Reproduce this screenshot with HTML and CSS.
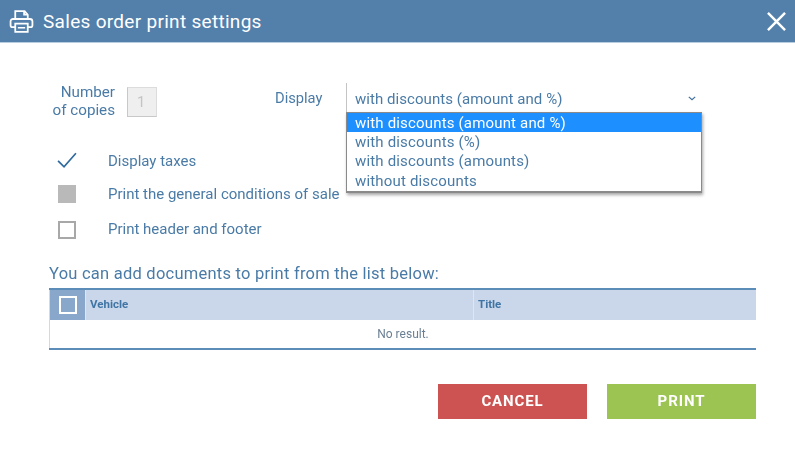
FILE: index.html
```html
<!DOCTYPE html>
<html lang="en">
<head>
  <meta charset="UTF-8">
  <title>Sales order print settings</title>
  <link rel="stylesheet" href="styles.css">
</head>
<body>
  <div class="dialog">
    <div class="titlebar">
      <svg class="print-icon" viewBox="0 0 24 24" fill="none" stroke="#fff" stroke-width="1.7">
        <path d="M6 10V2h9l3 3.500V10"/>
        <path d="M14.500 2v3.500H18"/>
        <path d="M6 17.500H3.500a2 2 0 0 1-2-2V12a2.400 2.400 0 0 1 2.400-2.400h16.200A2.400 2.400 0 0 1 22.500 12v3.500a2 2 0 0 1-2 2H18"/>
        <path d="M6 14h12v8H6z"/>
        <path d="M8.500 18h7" stroke-width="1.500"/>
      </svg>
      <h1>Sales order print settings</h1>
      <svg class="close-icon" viewBox="0 0 20 20" stroke="#fff" stroke-width="2.600">
        <path d="M1 1l18 18M19 1L1 19"/>
      </svg>
    </div>

    <div class="content">
      <div class="top-row">
        <label class="copies-label">Number<br>of copies</label>
        <div class="copies-input">1</div>
        <label class="display-label">Display</label>
        <div class="select">
          <div class="select-value">
            with discounts (amount and %)
            <svg class="chevron" viewBox="0 0 10 6" fill="none" stroke="#3f6f9c" stroke-width="1.500">
              <path d="M1 1l4 3.500L9 1"/>
            </svg>
          </div>
          <ul class="select-menu">
            <li class="active">with discounts (amount and %)</li>
            <li>with discounts (%)</li>
            <li>with discounts (amounts)</li>
            <li class="last">without discounts</li>
          </ul>
        </div>
      </div>

      <div class="options">
        <div class="option">
          <span class="box-slot">
            <svg class="check" viewBox="0 0 24 20" fill="none" stroke="#2f6a9e" stroke-width="2">
              <path d="M1.500 10.500l7 7L22.500 1.500"/>
            </svg>
          </span>
          <span>Display taxes</span>
        </div>
        <div class="option">
          <span class="box-slot"><span class="box box-disabled"></span></span>
          <span>Print the general conditions of sale</span>
        </div>
        <div class="option option-last">
          <span class="box-slot"><span class="box box-low"></span></span>
          <span>Print header and footer</span>
        </div>
      </div>

      <p class="list-title">You can add documents to print from the list below:</p>

      <table class="doc-table">
        <thead>
          <tr>
            <th class="col-check"><span class="head-box"></span></th>
            <th class="col-vehicle">Vehicle</th>
            <th>Title</th>
          </tr>
        </thead>
        <tbody>
          <tr>
            <td colspan="3">No result.</td>
          </tr>
        </tbody>
      </table>

      <div class="actions">
        <button class="btn-cancel">CANCEL</button>
        <button class="btn-print">PRINT</button>
      </div>
    </div>
  </div>
</body>
</html>
```

FILE: styles.css
```css
html, body {
  margin: 0;
  padding: 0;
  background: #fff;
}

body {
  font-family: Roboto, 'Liberation Sans', sans-serif;
  color: #4a7ba6;
  overflow: hidden;
}

.dialog {
  width: 795px;
  height: 450px;
  filter: blur(0.6px);
}

.titlebar {
  height: 42px;
  display: flex;
  align-items: center;
  background: #5280ab;
  border-bottom: 1px solid #b9cde0;
  color: #fff;
}

.print-icon {
  width: 25px;
  height: 25px;
  margin-left: 9px;
}

.titlebar h1 {
  margin: 0 0 0 9px;
  flex: 1;
  font-size: 19px;
  font-weight: 400;
  letter-spacing: 0.3px;
}

.close-icon {
  width: 19px;
  height: 19px;
  margin-right: 9px;
}

.content {
  padding: 40px 39px 0 49px;
}

.top-row {
  display: flex;
  align-items: flex-start;
  font-size: 14.700px;
}

.copies-label {
  width: 66px;
  text-align: right;
  font-size: 15.200px;
  line-height: 18px;
}

.copies-input {
  width: 30px;
  height: 30px;
  margin: 4px 0 0 12px;
  padding-left: 9px;
  box-sizing: border-box;
  border: 1px solid #dcdcdc;
  border-left-color: #c8c8c8;
  border-bottom-color: #c8c8c8;
  background: #efefef;
  color: #c4c4c4;
  line-height: 28px;
}

.display-label {
  margin: 6px 0 0 118px;
  width: 71px;
}

.select {
  position: relative;
  width: 356px;
  height: 29px;
  border-left: 1px solid #c4c4c4;
  box-sizing: border-box;
}

.select-value {
  display: flex;
  justify-content: space-between;
  align-items: center;
  height: 29px;
  padding: 2px 6px 0 8px;
  box-sizing: border-box;
  font-size: 15px;
  letter-spacing: 0.05px;
}

.chevron {
  width: 8px;
  height: 5px;
}

.select-menu {
  position: absolute;
  top: 29px;
  left: -1px;
  width: 356px;
  margin: 0;
  padding: 0 0 2px;
  list-style: none;
  box-sizing: border-box;
  background: #fff;
  border: 1px solid #8a8a8a;
  border-bottom-width: 2px;
  box-shadow: 1px 2px 3px rgba(0,0,0,0.35);
  font-size: 15px;
  letter-spacing: 0.17px;
}

.select-menu li {
  height: 19px;
  line-height: 20px;
  padding-left: 8px;
}

.select-menu .last {
  line-height: 22px;
}

.select-menu .active {
  background: #1e8fff;
  color: #fff;
}

.options {
  margin-top: 25px;
  font-size: 15px;
}

.option {
  display: flex;
  align-items: center;
  height: 33.500px;
}

.option-last {
  height: 35.500px;
}

.box-slot {
  display: flex;
  justify-content: center;
  width: 36px;
  margin-right: 23px;
}

.check {
  width: 22px;
  height: 17px;
}

.box {
  display: block;
  width: 18px;
  height: 18px;
  box-sizing: border-box;
  border: 2px solid #a8a8a8;
  background: #fff;
}

.box-disabled {
  background: #b9b9b9;
  border-color: #b9b9b9;
}

.box-low {
  margin-top: 3px;
}

.list-title {
  margin: 17px 0 4px;
  font-size: 16.500px;
  line-height: 20px;
  letter-spacing: 0.24px;
}

.doc-table {
  width: 707px;
  border-collapse: collapse;
  table-layout: fixed;
  border-top: 2px solid #5c8cb8;
  border-bottom: 2px solid #5c8cb8;
  border-left: 1px solid #cddaea;
  font-size: 11.500px;
}

.doc-table th {
  height: 31px;
  padding: 0 0 2px 4px;
  box-sizing: border-box;
  background: #cad7ea;
  border-left: 1px solid #dde6f1;
  color: #3f74a4;
  font-weight: 700;
  text-align: left;
}

.doc-table .col-check {
  width: 36px;
  padding: 0;
  background: #88a7ca;
  border-left: 0;
  text-align: center;
}

.col-vehicle {
  width: 388px;
}

.head-box {
  display: inline-block;
  width: 18px;
  height: 18px;
  box-sizing: border-box;
  border: 2px solid #fff;
  vertical-align: middle;
}

.doc-table td {
  height: 28px;
  padding: 0;
  text-align: center;
  font-size: 12px;
  color: #6b7f93;
}

.actions {
  display: flex;
  justify-content: flex-end;
  gap: 20px;
  margin-top: 34px;
}

.actions button {
  width: 149px;
  height: 35px;
  border: 1px solid transparent;
  color: #fff;
  font-family: inherit;
  font-size: 15px;
  font-weight: 700;
  letter-spacing: 0.9px;
}

.btn-cancel {
  background: #cd5353;
}

.btn-print {
  background: #9bc452;
}
```
